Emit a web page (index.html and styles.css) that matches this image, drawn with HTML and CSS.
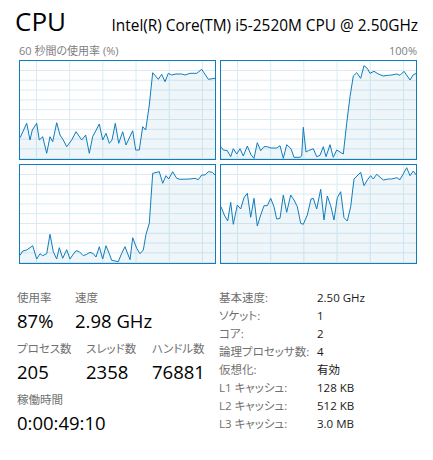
FILE: index.html
```html
<!DOCTYPE html>
<html lang="ja">

<head>
  <meta charset="utf-8">
  <title>CPU</title>
  <link rel="stylesheet" href="styles.css">
</head>

<body>
  <header class="head">
    <div class="title">CPU</div>
    <div class="model">Intel(R) Core(TM) i5-2520M CPU @ 2.50GHz</div>
  </header>

  <div class="caption">
    <span>60 秒間の使用率 (%)</span>
    <span>100%</span>
  </div>

  <div class="graphs">
    <div class="graph">
      <svg width="195" height="98" viewBox="0 0 195 98">
        <polygon points="-2,110 -2,76.3 0.3,76.3 6.7,62.3 10,79 12.3,69 16.7,62.3 19.3,79 22.7,75.7 26.7,92.3 30,75.7 32.7,80.7 36.7,61.7 40,74 43.3,79 46.7,85.7 51.7,79 56,70.7 61.7,79 65.7,74 69.3,92.3 72.7,75.7 79.3,63 82.7,79 86,72.3 89.3,82.3 92,79 95.3,62.3 98.7,82.3 102.7,70.7 106,84 112.7,69.7 115.7,89 119.3,89 122.7,65.7 125.7,69 129.3,44 132.7,11.7 138.3,18.3 141.7,13.3 145,20.7 148.3,12.3 151.7,14 156,13 161.7,13 165,14 170,12.3 176.7,12.3 181.7,8.3 188.3,18.3 195,17.3 197,17.3 197,110" />
      </svg>
    </div>
    <div class="graph">
      <svg width="195" height="98" viewBox="0 0 195 98">
        <polygon points="-2,110 -2,86.3 0.3,86.3 2.3,89 6.3,89.7 9.7,95.7 12.3,87.7 15.7,93 19,87.7 22.3,95 26.3,85 30,93.7 33,97.3 36.3,81.7 39.7,89.7 43,85.7 46.3,85.7 50,87 55.7,87 59,84.7 62.3,97.3 65.7,83.7 70,87.7 73,96.3 79,96.3 80.7,95 82.3,66.3 85,91 87.3,89.7 92.3,87.7 95.7,95.7 99,94.3 102.3,85.7 105,95.7 109,83.7 112.3,96.3 115.7,89 119,91 122.3,93 125.7,62.3 129,35.7 132.3,15 135.7,11.7 139.7,17.3 143,4.7 146.3,7.3 149,12.3 153,10.3 157.3,13 162.3,15 167.3,14.3 170.7,14 175.7,13 179,14.3 183,10.3 189,19 192.3,13.7 195.7,12.3 197,12.3 197,110" />
      </svg>
    </div>
    <div class="graph">
      <svg width="195" height="98" viewBox="0 0 195 98">
        <polygon points="-2,110 -2,90 0.3,90 2.7,86 6.7,85 10,82.7 12.7,80.7 16.7,94 20,88.7 22.7,90.7 26.7,88.7 30,69.3 33.3,86.7 36.7,94 39.3,82.7 42.7,93.3 46.7,84.7 50,94 52.7,90 56,85.7 59.3,86.7 63.3,90.7 66.7,89.3 70,87.3 73.3,88.7 76,92 79.3,81.7 82.7,94 86,80.7 89.3,88.7 91.7,95.3 98.3,96.7 101.7,88.3 105,81.7 110,94.7 112.7,72.7 116.7,83.3 120,88.7 123.3,85 126,69.3 129.3,58.3 132.7,8.3 139.3,6.7 142.7,18.3 146,10.7 148.7,14 152.7,6.7 156.7,13.3 160,14.3 170,14 175,13.3 178.3,14.7 181.7,10 185,10 188.3,6.7 192.3,7.3 195,10 197,10 197,110" />
      </svg>
    </div>
    <div class="graph">
      <svg width="195" height="98" viewBox="0 0 195 98">
        <polygon points="-2,110 -2,41.7 0,41.7 3.3,50 6.7,56 9.7,37.3 12.3,59.3 16.3,40 19.7,44 23,32.7 26.3,28.3 29.7,52.3 33,33.3 36.3,61 39.7,50 43,40.7 46.3,40.7 49.7,33.3 53,41.7 55.7,54 59,53.3 62.3,30 65.7,47.3 69.7,30 73,35 76.3,41.7 79.7,58.3 82.3,59.3 86.3,50 90,34 92.3,33.3 95.7,44 99.7,24.3 103,55 106.3,31 109.7,40.7 113,55 116.3,32.7 119.7,26.7 123,52.7 126.3,56 129.7,41.7 133,14 139.7,7.3 143,20.7 146.3,15 149.7,10.7 152.3,14 155.7,9.3 162.3,15 167.3,14 170.7,14 175.7,12.7 179,14.7 185.7,2.7 189,10.7 192.3,6 195.7,10.7 197,10.7 197,110" />
      </svg>
    </div>
  </div>

  <main class="stats">
    <div class="live">
      <div class="row">
        <div class="stat w57">
          <div class="label">使用率</div>
          <div class="value">87%</div>
        </div>
        <div class="stat">
          <div class="label">速度</div>
          <div class="value">2.98 GHz</div>
        </div>
      </div>
      <div class="row">
        <div class="stat w68">
          <div class="label">プロセス数</div>
          <div class="value">205</div>
        </div>
        <div class="stat w66">
          <div class="label">スレッド数</div>
          <div class="value">2358</div>
        </div>
        <div class="stat">
          <div class="label">ハンドル数</div>
          <div class="value">76881</div>
        </div>
      </div>
      <div class="row">
        <div class="stat">
          <div class="label">稼働時間</div>
          <div class="value">0:00:49:10</div>
        </div>
      </div>
    </div>

    <dl class="specs">
      <dt>基本速度:</dt><dd>2.50 GHz</dd>
      <dt>ソケット:</dt><dd>1</dd>
      <dt>コア:</dt><dd>2</dd>
      <dt>論理プロセッサ数:</dt><dd>4</dd>
      <dt>仮想化:</dt><dd>有効</dd>
      <dt>L1 キャッシュ:</dt><dd>128 KB</dd>
      <dt>L2 キャッシュ:</dt><dd>512 KB</dd>
      <dt>L3 キャッシュ:</dt><dd>3.0 MB</dd>
    </dl>
  </main>
</body>

</html>
```

FILE: styles.css
```css
body {
  font-family: 'Open Sans', 'Noto Sans CJK JP', sans-serif;
  margin: 0;
  padding: 0;
  background-color: #fff;
  color: #000;
}

.head {
  display: flex;
  justify-content: space-between;
  align-items: baseline;
  padding: 3px 15px 0 15px;
  height: 39px;
}

.title {
  font-size: 26px;
  line-height: 36px;
}

.model {
  font-size: 15.4px;
}

.caption {
  display: flex;
  justify-content: space-between;
  padding: 0 16px 0 19px;
  font-size: 11px;
  line-height: 18px;
  color: #808080;
  font-feature-settings: "palt";
}

.graphs {
  display: grid;
  grid-template-columns: 197px 197px;
  grid-template-rows: 100px 100px;
  gap: 4px;
  margin-left: 19px;
}

.graph {
  border: 1px solid #117dbb;
  background-color: #fff;
  background-image:
    linear-gradient(#d9eaf4 1px, transparent 1px),
    linear-gradient(90deg, #d9eaf4 1px, transparent 1px);
  background-size: 33.2px 9.8px;
  background-position: 16px 9px;
}

.graph svg {
  display: block;
}

.graph polygon {
  fill: #117dbb;
  fill-opacity: 0.065;
  stroke: #117dbb;
  stroke-width: 1;
  stroke-linejoin: round;
}

.stats {
  display: flex;
  padding: 24px 0 0 17px;
}

.live {
  width: 202px;
}

.row {
  display: flex;
  height: 51px;
}

.w57 { width: 58px; }
.w68 { width: 69px; }
.w66 { width: 66px; }

.label {
  font-size: 11.5px;
  line-height: 20px;
  color: #707070;
  font-feature-settings: "palt";
}

.value {
  font-size: 18.5px;
  line-height: 26px;
}

.specs {
  display: grid;
  grid-template-columns: 98px auto;
  grid-auto-rows: 18px;
  align-items: center;
  margin: 0;
  font-size: 11.5px;
  font-feature-settings: "palt";
}

.specs dt {
  color: #707070;
  white-space: nowrap;
}

.specs dd {
  margin: 0;
  color: #1a1a1a;
}
```
